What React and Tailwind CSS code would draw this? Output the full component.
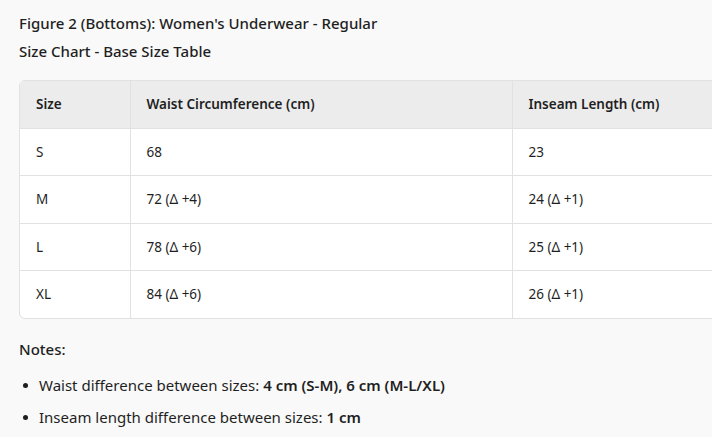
export default function App() {
  const rows = [
    ["S", "68", "23"],
    ["M", "72 (Δ +4)", "24 (Δ +1)"],
    ["L", "78 (Δ +6)", "25 (Δ +1)"],
    ["XL", "84 (Δ +6)", "26 (Δ +1)"],
  ];
  return (
    <div
      className="w-[712px] h-[437px] overflow-hidden bg-[#f9f9f9] text-[#1f1f1f]"
      style={{ fontFamily: '"Noto Sans", "Open Sans", sans-serif' }}
    >
      <div className="pl-[19px] pt-[9px]">
        <div className="text-[15px] font-medium leading-[28px]">Figure 2 (Bottoms): Women's Underwear - Regular</div>
        <div className="text-[15px] font-medium leading-[28px]">Size Chart - Base Size Table</div>
        <div className="mt-[15px] w-[760px] rounded-[6px] border border-[#e1e1e1] overflow-hidden bg-white">
          <table className="w-full border-collapse table-fixed text-[13.5px]">
            <colgroup>
              <col className="w-[110px]" />
              <col className="w-[382px]" />
              <col />
            </colgroup>
            <thead>
              <tr className="bg-[#ececec] h-[47px]">
                <th className="text-left font-semibold pl-[16px] border-r border-[#e1e1e1]">Size</th>
                <th className="text-left font-semibold pl-[16px] border-r border-[#e1e1e1]">Waist Circumference (cm)</th>
                <th className="text-left font-semibold pl-[16px]">Inseam Length (cm)</th>
              </tr>
            </thead>
            <tbody>
              {rows.map((r) => (
                <tr key={r[0]} className="h-[47.5px] border-t border-[#e1e1e1]">
                  <td className="pl-[16px] border-r border-[#e1e1e1]">{r[0]}</td>
                  <td className="pl-[16px] border-r border-[#e1e1e1]">{r[1]}</td>
                  <td className="pl-[16px]">{r[2]}</td>
                </tr>
              ))}
            </tbody>
          </table>
        </div>
        <div className="mt-[18px] text-[15px] font-medium leading-[24px]">Notes:</div>
        <ul className="mt-[8px] text-[15px] leading-[32px]">
          <li className="flex items-center">
            <span className="w-[5px] h-[5px] rounded-full bg-[#1f1f1f] ml-[4px] mr-[11px]" />
            <span>Waist difference between sizes: <b className="font-semibold">4 cm (S-M), 6 cm (M-L/XL)</b></span>
          </li>
          <li className="flex items-center">
            <span className="w-[5px] h-[5px] rounded-full bg-[#1f1f1f] ml-[4px] mr-[11px]" />
            <span>Inseam length difference between sizes: <b className="font-semibold">1 cm</b></span>
          </li>
        </ul>
      </div>
    </div>
  );
}
